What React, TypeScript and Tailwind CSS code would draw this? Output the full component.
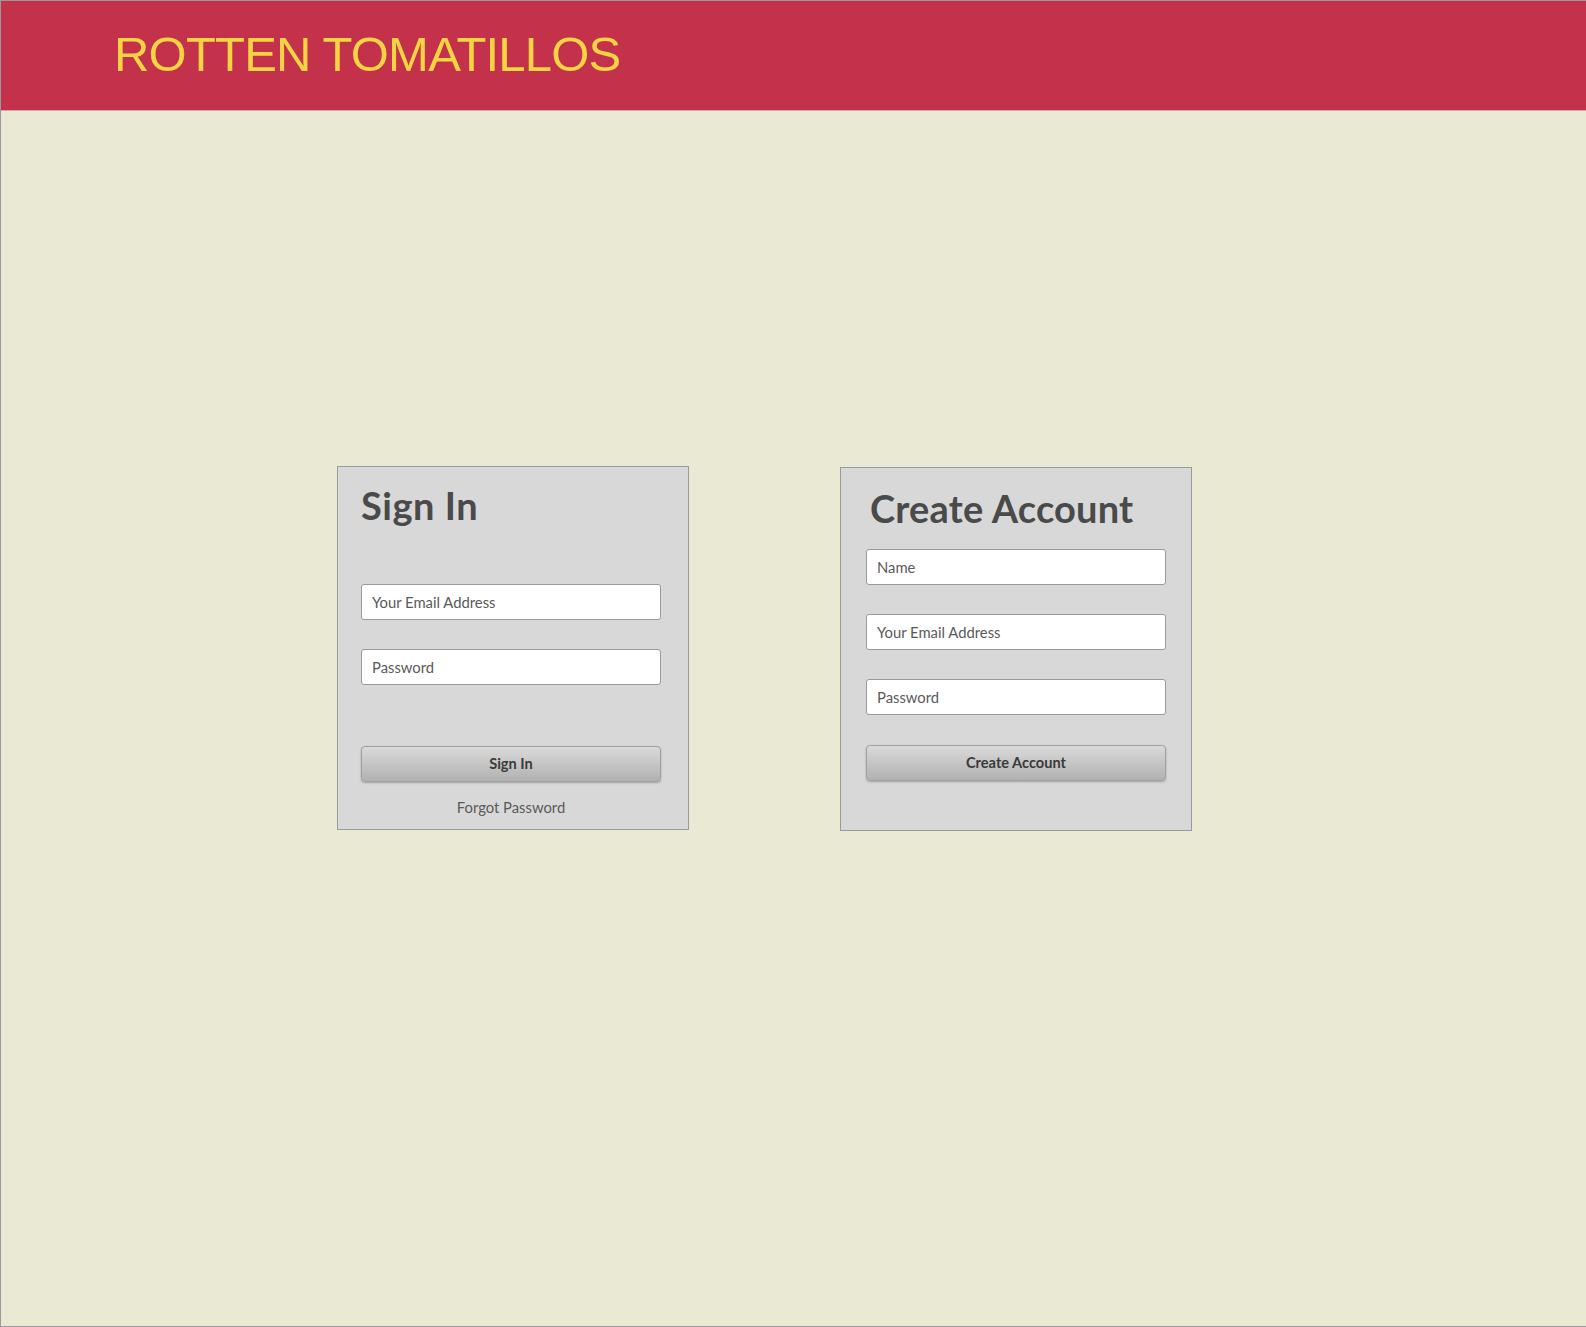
import React from 'react';

const Field = ({ placeholder, type = 'text' }: { placeholder: string; type?: string }) => (
    <input
        type={type}
        placeholder={placeholder}
        className="block w-[300px] h-[36px] bg-white border border-[#9a9a9a] rounded-[3px] px-[10px] text-[14.8px] text-[#444] placeholder:text-[#5a5a5a] outline-none"
    />
);

const GrayButton = ({ label }: { label: string }) => (
    <button
        type="button"
        className="block w-[300px] h-[36px] rounded-[4px] border border-[#a0a0a0] bg-linear-to-b from-[#dadada] to-[#b1b1b1] shadow-[0_1px_2px_rgba(0,0,0,0.25)] text-[14.6px] font-bold text-[#3a3a3a]"
    >
        {label}
    </button>
);

const App: React.FC = () => {
    return (
        <div className="w-[1587px] h-[1327px] border-t border-l border-b border-[#9a9a9a] bg-[#eaead4] font-['Lato',sans-serif] overflow-hidden">
            {/* header */}
            <div className="h-[110px] bg-[#c4314a] border-b border-[#d9a4ad] pl-[113px] pt-[25px]">
                <h1 className="font-['Liberation_Sans',Arial,sans-serif] text-[49px] leading-[56px] tracking-[-0.8px] text-[#f5d443]">
                    ROTTEN TOMATILLOS
                </h1>
            </div>

            <div className="flex items-start pl-[336px] pt-[355px] gap-[151px]">
                {/* Sign In */}
                <div className="w-[352px] h-[364px] bg-[#d8d8d8] border border-[#9a9a9a] pl-[23px] pt-[16px]">
                    <h2 className="text-[38px] leading-[44px] tracking-[0.5px] font-bold text-[#4a4a4a]">Sign In</h2>
                    <div className="mt-[57px] flex flex-col gap-[29px]">
                        <Field placeholder="Your Email Address" />
                        <Field placeholder="Password" type="password" />
                    </div>
                    <div className="mt-[61px]">
                        <GrayButton label="Sign In" />
                    </div>
                    <div className="w-[300px] text-center mt-[14px] text-[14.8px] text-[#5a5a5a]">Forgot Password</div>
                </div>

                {/* Create Account */}
                <div className="w-[352px] h-[364px] mt-[1px] bg-[#d8d8d8] border border-[#9a9a9a] pl-[25px] pt-[18px]">
                    <h2 className="ml-[4px] text-[38px] leading-[44px] tracking-[0.2px] font-bold text-[#4a4a4a]">Create Account</h2>
                    <div className="mt-[19px] flex flex-col gap-[29px]">
                        <Field placeholder="Name" />
                        <Field placeholder="Your Email Address" />
                        <Field placeholder="Password" type="password" />
                    </div>
                    <div className="mt-[30px]">
                        <GrayButton label="Create Account" />
                    </div>
                </div>
            </div>
        </div>
    );
};

export default App;
